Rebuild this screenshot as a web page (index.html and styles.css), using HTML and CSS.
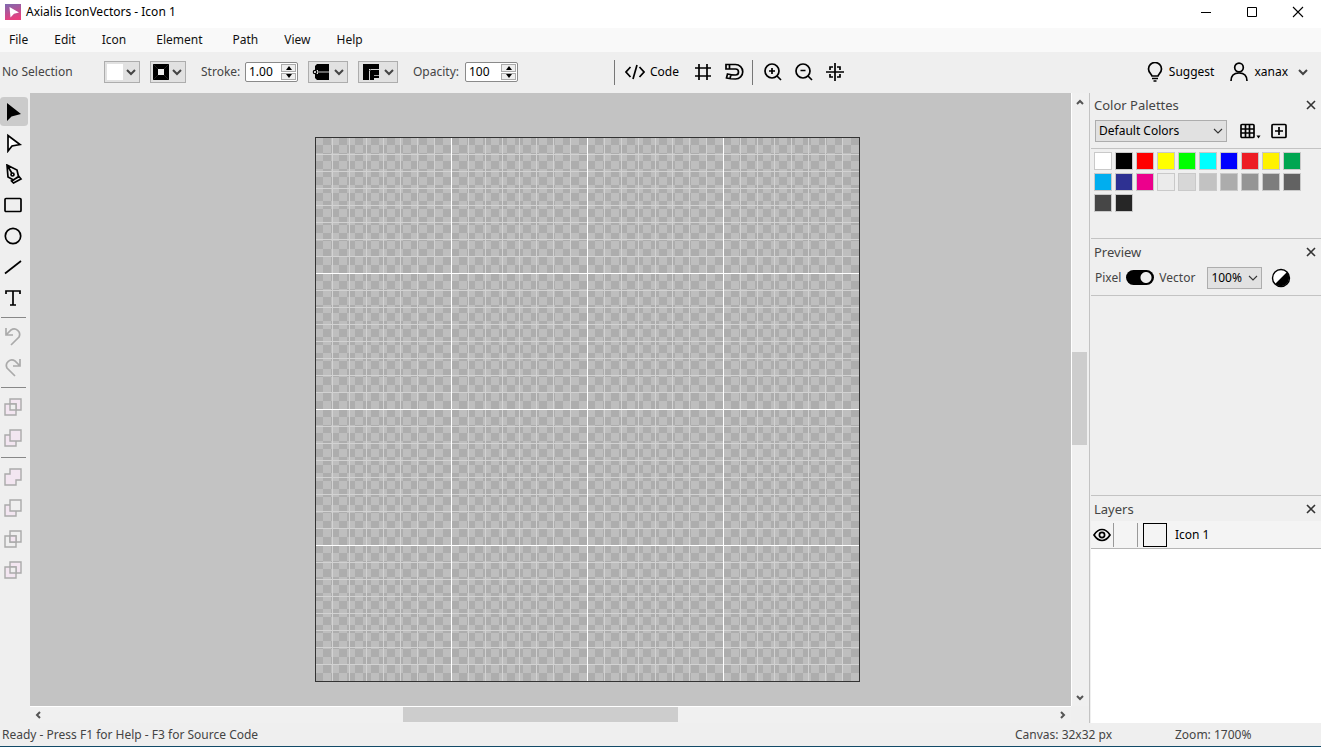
FILE: index.html
```html
<!DOCTYPE html>
<html lang="en">
<head>
<meta charset="utf-8">
<title>Axialis IconVectors - Icon 1</title>
<link rel="stylesheet" href="styles.css">
</head>
<body>
<svg class="defs" aria-hidden="true">
  <symbol id="chevron" viewBox="0 0 12 8"><path d="M2 2l4 4 4-4" fill="none" stroke="currentColor" stroke-width="2"/></symbol>
  <symbol id="thin-chevron" viewBox="0 0 10 8"><path d="M1 2l4 4 4-4" fill="none" stroke="currentColor" stroke-width="1.1"/></symbol>
  <symbol id="close" viewBox="0 0 10 10"><path d="M1 1l8 8M9 1L1 9" fill="none" stroke="currentColor" stroke-width="1.6"/></symbol>
  <linearGradient id="brand" x1="0" y1="0" x2="0.3" y2="1"><stop offset="0" stop-color="#7d6ab0"/><stop offset="1" stop-color="#e8407f"/></linearGradient>
</svg>
<div class="app">
  <header class="titlebar">
    <svg class="logo" width="16" height="16"><rect width="16" height="16" fill="url(#brand)"/><path d="M4.500 3l9.500 5.500-5 1.200L5.500 13.500z" fill="#fff"/></svg>
    <h1 class="title">Axialis IconVectors - Icon 1</h1>
    <div class="window-buttons">
      <button class="window-button" aria-label="Minimize"><svg width="12" height="12"><path d="M1 6.500h10" stroke="#000"/></svg></button>
      <button class="window-button" aria-label="Maximize"><svg width="12" height="12"><path d="M1.500 1.500h9v9h-9z" fill="none" stroke="#000"/></svg></button>
      <button class="window-button" aria-label="Close"><svg width="12" height="12"><path d="M1 1l10 10M11 1L1 11" stroke="#000" stroke-width="1.100"/></svg></button>
    </div>
  </header>
  <nav class="menubar">
    <button class="menu">File</button><button class="menu">Edit</button><button class="menu">Icon</button><button class="menu roomy">Element</button><button class="menu">Path</button><button class="menu">View</button><button class="menu">Help</button>
  </nav>
  <div class="toolbar">
    <span class="selection">No Selection</span>
    <div class="swatch-buttons">
      <button class="drop" aria-label="Fill"><svg width="16" height="16"><path fill="#fff" d="M0 0h16v16H0z"/></svg><svg class="arrow" width="12" height="8"><use href="#chevron"/></svg></button>
      <button class="drop" aria-label="Stroke color"><svg width="16" height="16"><path d="M0 0h16v16H0z"/><path d="M0 0l5 5M16 0l-5 5M0 16l5-5M16 16l-5-5" stroke="#333" stroke-width=".6"/><path fill="#eee" d="M5 5h6v6H5z"/></svg><svg class="arrow" width="12" height="8"><use href="#chevron"/></svg></button>
    </div>
    <label class="field-label stroke-label" for="stroke">Stroke:</label>
    <div class="spinner">
      <input class="number" id="stroke" type="text" inputmode="decimal" value="1.00">
      <div class="steps"><button class="step" aria-label="Increase stroke"><svg width="6" height="4"><path d="M0 4l3-4 3 4z"/></svg></button><button class="step" aria-label="Decrease stroke"><svg width="6" height="4"><path d="M0 0l3 4 3-4z"/></svg></button></div>
    </div>
    <div class="shape-buttons">
      <button class="drop wide" aria-label="Line cap"><svg width="18" height="16"><path d="M3 2l2-2h12v16H5l-2-2v-4h3V6H3z"/><path d="M5 8h12" stroke="#ccc"/><circle cx="3" cy="8" r="1.700" fill="#eee" stroke="#000" stroke-width="1.200"/></svg><svg class="arrow" width="12" height="8"><use href="#chevron"/></svg></button>
      <button class="drop wide" aria-label="Line join"><svg width="18" height="16"><path d="M1 0h16v5H7v11H1z"/><path d="M8 6h9v8h-5v2H8z"/><path d="M7.500 16V5.500H17M12 11.500h5" fill="none" stroke="#ccc" stroke-width=".8"/><path d="M6 4h3v3H6z"/><path d="M7 5h1.500v1.500H7z" fill="#eee"/></svg><svg class="arrow" width="12" height="8"><use href="#chevron"/></svg></button>
    </div>
    <label class="field-label opacity-label" for="opacity">Opacity:</label>
    <div class="spinner">
      <input class="number" id="opacity" type="text" inputmode="numeric" value="100">
      <div class="steps"><button class="step" aria-label="Increase opacity"><svg width="6" height="4"><path d="M0 4l3-4 3 4z"/></svg></button><button class="step" aria-label="Decrease opacity"><svg width="6" height="4"><path d="M0 0l3 4 3-4z"/></svg></button></div>
    </div>
    <div class="view-tools">
      <button class="action code"><svg class="line" width="20" height="16"><path d="M5.500 3L1 8l4.500 5M14.500 3L19 8l-4.500 5M12 1L8 15"/></svg>Code</button>
      <button class="action" aria-label="Grid"><svg class="line" width="18" height="18"><path d="M5 1v16M13 1v16M1 5h16M1 13h16"/></svg></button>
      <button class="action magnet" aria-label="Snap"><svg class="line" width="20" height="18"><path d="M2 1.500h9.500a7.200 7.200 0 0 1 0 14.500q-5 0-9-1l1-4q4 1 8 1a2.800 2.800 0 0 0 0-6H2zM5.500 1.500V6M7 11.500l-1 4"/></svg></button>
      <span class="divider"></span>
      <button class="action zoom-in" aria-label="Zoom in"><svg class="line" width="18" height="18"><circle cx="8" cy="8" r="7"/><path d="M13 13l4 4M5 8h6M8 5v6"/></svg></button>
      <button class="action zoom-out" aria-label="Zoom out"><svg class="line" width="18" height="18"><circle cx="8" cy="8" r="7"/><path d="M13 13l4 4M5.500 7.500h5"/></svg></button>
      <button class="action zoom-fit" aria-label="Center"><svg class="line" width="20" height="18"><path d="M10 0v18M1 9h18M8 4H5v3M12 4h3v3M5 11v3h3M15 11v3h-3"/></svg></button>
    </div>
    <div class="account">
      <button class="action"><svg class="line" width="16" height="20"><path d="M5 14C4.500 12 1.500 10.500 1.500 7a6.500 6.500 0 0 1 13 0c0 3.500-3 5-3.500 7zM5 16.500h6M6.500 19h3"/></svg>Suggest</button>
      <button class="action user"><svg class="line" width="18" height="20"><circle cx="9" cy="5.500" r="4.300"/><path d="M1 19c0-5 3-8 8-8s8 3 8 8"/></svg>xanax<svg class="arrow" width="12" height="8"><use href="#chevron"/></svg></button>
    </div>
  </div>
  <main class="workspace">
    <div class="tools" role="toolbar" aria-label="Tools">
      <button class="tool active" aria-label="Select"><svg width="20" height="20"><path d="M4 1v18l4.500-4.500L18 12z"/></svg></button>
      <button class="tool" aria-label="Direct select"><svg class="line" width="20" height="20"><path fill="#fff" d="M5 2.500V18l4-5 8-1.500z"/></svg></button>
      <button class="tool" aria-label="Pen"><svg class="line" width="20" height="20"><path d="M4 1l10 5 1.500 6.500-5 3.500L5 13zM4 1l4.800 8M8.500 17l7.500-4.500 2 2.500-7.500 4z"/><circle cx="9.500" cy="10.500" r="1.500"/></svg></button>
      <button class="tool" aria-label="Rectangle"><svg class="line" width="20" height="20"><rect x="2" y="3.500" width="16" height="13" rx="1"/></svg></button>
      <button class="tool" aria-label="Ellipse"><svg class="line" width="20" height="20"><circle cx="10" cy="10" r="7.700"/></svg></button>
      <button class="tool" aria-label="Line"><svg class="line" width="20" height="20"><path d="M2 16.500L18 4"/></svg></button>
      <button class="tool" aria-label="Text"><svg class="line" width="20" height="20"><path d="M3 6V3h14v3M10 3v14M7 17h6"/></svg></button>
      <hr class="rule">
      <button class="tool dim" aria-label="Undo"><svg class="line" width="20" height="20"><path d="M3 1v7h7M3 8l5-5a5.500 5.500 0 0 1 8 7L8 18"/></svg></button>
      <button class="tool dim" aria-label="Redo"><svg class="line" width="20" height="20"><path d="M17 1v7h-7M17 8l-5-5a5.500 5.500 0 0 0-8 7l8 8"/></svg></button>
      <hr class="rule">
      <button class="tool dim" aria-label="Exclude"><svg class="bool" width="20" height="20"><path class="pink" d="M7 2h11v11H7z"/><path class="pink" d="M2 7h11v11H2z"/><path class="clear" d="M7 7h6v6H7z"/></svg></button>
      <button class="tool dim" aria-label="Arrange"><svg class="bool" width="20" height="20"><path class="pink" d="M2 7h11v11H2z"/><path class="pink" d="M7 2h11v11H7z"/></svg></button>
      <hr class="rule">
      <button class="tool dim" aria-label="Union"><svg class="bool" width="20" height="20"><path class="pink" d="M7 2h11v11h-5v5H2V7h5z"/></svg></button>
      <button class="tool dim" aria-label="Subtract"><svg class="bool" width="20" height="20"><path class="pink" d="M2 7h11v11H2z"/><path class="clear" d="M7 2h11v11H7z"/></svg></button>
      <button class="tool dim" aria-label="Intersect"><svg class="bool" width="20" height="20"><path class="clear" d="M7 2h11v11H7z"/><path d="M2 7h11v11H2z"/><path class="pink" d="M7 7h6v6H7z"/></svg></button>
      <button class="tool dim" aria-label="Divide"><svg class="bool" width="20" height="20"><path class="pink" d="M7 2h11v11H7z"/><path class="pink" d="M2 7h11v11H2z"/><path class="clear" d="M7 7h6v6H7z"/></svg></button>
    </div>
    <div class="editor">
      <div class="stage"><div class="artboard"></div></div>
      <div class="scroll vertical">
        <button class="scroll-arrow" aria-label="Scroll up"><svg width="8" height="8"><path d="M1 6l3-3 3 3" fill="none" stroke="#555" stroke-width="2"/></svg></button>
        <div class="track"><div class="thumb"></div></div>
        <button class="scroll-arrow" aria-label="Scroll down"><svg width="8" height="8"><path d="M1 2l3 3 3-3" fill="none" stroke="#555" stroke-width="2"/></svg></button>
      </div>
      <div class="scroll horizontal">
        <button class="scroll-arrow" aria-label="Scroll left"><svg width="8" height="8"><path d="M6 1L3 4l3 3" fill="none" stroke="#555" stroke-width="2"/></svg></button>
        <div class="track"><div class="thumb"></div></div>
        <button class="scroll-arrow" aria-label="Scroll right"><svg width="8" height="8"><path d="M2 1l3 3-3 3" fill="none" stroke="#555" stroke-width="2"/></svg></button>
      </div>
    </div>
    <aside class="side">
      <section class="palettes">
        <div class="panel-head"><h2 class="panel-title">Color Palettes</h2><button class="close" aria-label="Close palettes"><svg width="10" height="10"><use href="#close"/></svg></button></div>
        <div class="palette-controls">
          <div class="select-wrap palette-select"><select class="select" aria-label="Palette"><option>Default Colors</option></select><svg class="select-arrow" width="10" height="8"><use href="#thin-chevron"/></svg></div>
          <button class="action palette-grid" aria-label="Palette view"><svg class="line" width="22" height="18"><rect x="2" y="2.500" width="13" height="13" rx="1"/><path d="M6.500 2.500v13M10.500 2.500v13M2 7h13M2 11h13"/><path d="M17.500 13.500h4l-2 3z" fill="#000" stroke="none"/></svg></button>
          <button class="action" aria-label="Add palette"><svg class="line" width="16" height="18"><rect x="1" y="2.500" width="14" height="13" rx="1"/><path d="M4 9h8M8 5v8"/></svg></button>
        </div>
        <div class="swatches">
          <button class="swatch" style="background:#ffffff" aria-label="White"></button><button class="swatch" style="background:#000000" aria-label="Black"></button><button class="swatch" style="background:#ff0000" aria-label="Red"></button><button class="swatch" style="background:#ffff00" aria-label="Yellow"></button><button class="swatch" style="background:#00ff00" aria-label="Lime"></button><button class="swatch" style="background:#00ffff" aria-label="Cyan"></button><button class="swatch" style="background:#0000ff" aria-label="Blue"></button><button class="swatch" style="background:#ed1c24" aria-label="Scarlet"></button><button class="swatch" style="background:#fff200" aria-label="Lemon"></button><button class="swatch" style="background:#00a651" aria-label="Green"></button>
          <button class="swatch" style="background:#00aeef" aria-label="Sky"></button><button class="swatch" style="background:#2e3192" aria-label="Indigo"></button><button class="swatch" style="background:#ec008c" aria-label="Magenta"></button><button class="swatch" style="background:#ebebeb" aria-label="Gray 8"></button><button class="swatch" style="background:#d7d7d7" aria-label="Gray 16"></button><button class="swatch" style="background:#c2c2c2" aria-label="Gray 24"></button><button class="swatch" style="background:#acacac" aria-label="Gray 32"></button><button class="swatch" style="background:#959595" aria-label="Gray 42"></button><button class="swatch" style="background:#7d7d7d" aria-label="Gray 51"></button><button class="swatch" style="background:#626262" aria-label="Gray 62"></button>
          <button class="swatch" style="background:#464646" aria-label="Gray 73"></button><button class="swatch" style="background:#262626" aria-label="Gray 85"></button>
        </div>
      </section>
      <section class="preview">
        <div class="panel-head"><h2 class="panel-title">Preview</h2><button class="close" aria-label="Close preview"><svg width="10" height="10"><use href="#close"/></svg></button></div>
        <div class="preview-controls">
          <label for="mode">Pixel</label><input class="switch" id="mode" type="checkbox" checked><label for="mode">Vector</label>
          <div class="select-wrap zoom-select"><select class="select" aria-label="Preview zoom"><option>100%</option></select><svg class="select-arrow" width="10" height="8"><use href="#thin-chevron"/></svg></div>
          <button class="action" aria-label="Contrast"><svg width="20" height="20"><circle cx="10" cy="10" r="8.500" fill="#fff" stroke="#000" stroke-width="1.400"/><path d="M16 4a8.500 8.500 0 0 1-12 12z"/></svg></button>
        </div>
        <div class="preview-area"></div>
      </section>
      <section class="layers">
        <div class="panel-head"><h2 class="panel-title">Layers</h2><button class="close" aria-label="Close layers"><svg width="10" height="10"><use href="#close"/></svg></button></div>
        <div class="layer">
          <button class="eye" aria-label="Visibility"><svg class="line" width="18" height="14"><path d="M1 7q3.500-5.500 8-5.500T17 7q-3.500 5.500-8 5.500T1 7z"/><circle cx="9" cy="7" r="2.600"/></svg></button>
          <span class="lock"></span><span class="thumbnail"></span><span class="layer-name">Icon 1</span>
        </div>
        <div class="layer-list"></div>
      </section>
    </aside>
  </main>
  <footer class="status"><span class="status-help">Ready - Press F1 for Help - F3 for Source Code</span><span class="status-canvas">Canvas: 32x32 px</span><span class="status-zoom">Zoom: 1700%</span></footer>
</div>
</body>
</html>
```

FILE: styles.css
```css
* { box-sizing: border-box; }
body { margin: 0; font: 12px/16px "Noto Sans", "Open Sans", sans-serif; color: #444; background: #efefef; }
button, input, select { font: inherit; color: #000; border: 0; border-radius: 0; margin: 0; padding: 0; background: none; }
svg { display: block; flex: none; }
.defs { position: absolute; width: 0; height: 0; }
.line { fill: none; stroke: #000; stroke-width: 1.7; }
.app { height: 100vh; display: flex; flex-direction: column; border-bottom: 1px solid #124a68; overflow: hidden; }

.titlebar { flex: none; height: 28px; padding: 0 0 4px 5px; display: flex; align-items: center; background: #fff; }
.title { margin: 0 0 0 5px; font-size: 12px; font-weight: 400; color: #000; }
.window-buttons { margin-left: auto; display: flex; }
.window-button { width: 46px; height: 24px; display: grid; place-items: center; }
.menubar { flex: none; height: 24px; display: flex; gap: 26px; padding-left: 9px; background: #f9f9f9; }
.menu { color: #111; }
.roomy { margin: 0 4px; }

.toolbar { flex: none; height: 41px; padding: 0 12px 1px 2px; display: flex; align-items: center; }
.selection { width: 102px; }
.swatch-buttons, .shape-buttons { display: flex; gap: 10px; }
.drop { width: 36px; height: 22px; padding: 0 2px; display: flex; align-items: center; justify-content: space-between; background: #e1e1e1; border: 1px solid #adadad; }
.wide { width: 40px; padding-left: 3px; }
.arrow { color: #444; }
.field-label { margin-left: 15px; }
.stroke-label { width: 44px; }
.opacity-label { width: 52px; }
.spinner { width: 53px; height: 20px; display: flex; padding: 1px; background: #fff; border: 1px solid #8a8a8a; border-radius: 2px; }
.number { width: 34px; padding-left: 2px; }
.steps { width: 15px; display: flex; flex-direction: column; gap: 1px; }
.step { flex: 1; display: grid; place-items: center; background: #eee; border: 1px solid #aaa; }
.shape-buttons { margin-left: 10px; }
.view-tools { margin-left: 96px; height: 25px; padding-left: 10px; display: flex; align-items: center; border-left: 1px solid #777; }
.action { display: flex; align-items: center; gap: 5px; }
.code { width: 69px; }
.magnet { margin-left: 12px; }
.divider { width: 1px; height: 25px; margin: 0 11px 0 8px; background: #777; }
.zoom-out { margin-left: 13px; }
.zoom-fit { margin-left: 12px; }
.account { margin-left: auto; display: flex; gap: 16px; }
.account .action { gap: 6px; }
.account .arrow { margin-left: 3px; }

.workspace { flex: 1; min-height: 0; display: grid; grid-template-columns: 30px minmax(0, 1fr) 232px; }
.tools { padding-top: 3px; }
.tool { width: 28px; height: 31px; padding: 0 5px 0 3px; display: grid; place-items: center start; }
.active { background: #cbcbcb; border: solid transparent; border-width: 1px 0; border-radius: 4px; background-clip: padding-box; }
.rule { width: 25px; height: 1px; margin: 4px 0 3px 1px; border: 0; background: #888; }
.dim .line { stroke: #aaa; }
.bool { fill: none; stroke: #aaa; stroke-width: 1.4; }
.pink { fill: #f3e6f1; }
.clear { fill: #efefef; }

.editor { display: grid; grid-template: minmax(0, 1fr) 17px / minmax(0, 1fr) 18px; }
.stage { display: grid; place-content: center; padding: 20px 0 0 74px; overflow: hidden; background: #c3c3c3; }
.artboard {
  width: 545px; height: 545px; border: 1px solid #333; background-origin: border-box;
  background-image:
    linear-gradient(to right, #fff 1px, transparent 1px),
    linear-gradient(to bottom, #fff 1px, transparent 1px),
    linear-gradient(to right, #d2d2d2 1px, transparent 1px),
    linear-gradient(to bottom, #d2d2d2 1px, transparent 1px),
    repeating-conic-gradient(#adadad 0 25%, #bebebe 0 50%);
  background-size: 136px 136px, 136px 136px, 17px 17px, 17px 17px, 16px 16px;
}
.scroll { display: flex; background: #f0f0f0; }
.scroll-arrow { flex: none; width: 16px; height: 16px; display: grid; place-items: center; }
.track { flex: 1; display: flex; }
.thumb { background: #cdcdcd; }
.vertical { flex-direction: column; border-left: 1px solid #fff; padding-top: 1px; }
.vertical .scroll-arrow { width: 15px; }
.vertical .track { flex-direction: column; width: 15px; }
.vertical .track::before { content: ""; flex: 242; }
.vertical .thumb { flex: 93; }
.vertical .track::after { content: ""; flex: 245; }
.horizontal { border-top: 1px solid #fff; }
.horizontal .scroll-arrow { height: 15px; }
.horizontal .track { height: 15px; }
.horizontal .track::before { content: ""; flex: 357; }
.horizontal .thumb { flex: 275; }
.horizontal .track::after { content: ""; flex: 377; }

.side { display: flex; flex-direction: column; border-left: 1px solid #c3c3c3; padding-left: 1px; }
.panel-head { flex: none; height: 24px; padding: 0 5px 0 3px; display: flex; align-items: center; justify-content: space-between; }
.panel-title { margin: 0; font-size: 13px; font-weight: 400; }
.close { color: #333; }
.palettes { flex: none; height: 145px; }
.palette-controls { height: 32px; padding: 3px 0 6px 4px; display: flex; align-items: center; gap: 10px; border-bottom: 1px solid #c3c3c3; }
.select-wrap { position: relative; height: 22px; }
.select { width: 100%; height: 100%; padding-left: 3px; appearance: none; background: #e1e1e1; border: 1px solid #adadad; }
.select-arrow { position: absolute; right: 4px; top: 7px; color: #333; pointer-events: none; }
.palette-select { width: 132px; }
.palette-grid { margin-left: 2px; }
.swatches { padding: 3px 0 0 3px; display: grid; grid-template-columns: repeat(10, 18px); gap: 3px; }
.swatch { height: 18px; border: 1px solid #c9c9c9; }
.preview { flex: none; height: 257px; display: flex; flex-direction: column; border-top: 1px solid #c3c3c3; }
.preview .panel-head { height: 26px; }
.preview-controls { height: 31px; padding: 0 0 5px 4px; display: flex; align-items: center; gap: 5px; border-bottom: 1px solid #c3c3c3; }
.switch { appearance: none; width: 28px; height: 15px; border-radius: 8px; background: radial-gradient(circle at 20px 50%, #efefef 5px, #000 6px); }
.zoom-select { width: 55px; margin-left: 7px; }
.preview-controls .action { margin-left: 4px; }
.preview-area { flex: 1; }
.layers { flex: 1; display: flex; flex-direction: column; border-top: 1px solid #c3c3c3; }
.layers .panel-head { height: 25px; }
.layer { flex: none; height: 28px; display: flex; align-items: center; background: #f4f4f4; border-bottom: 1px solid #b5b5b5; }
.eye { width: 22px; padding-left: 2px; }
.lock { width: 25px; height: 24px; border: solid #999; border-width: 0 1px; }
.thumbnail { width: 24px; height: 24px; margin: 0 8px 0 5px; border: 1px solid #000; }
.layer-name { color: #000; }
.layer-list { flex: 1; background: #fff; }

.status { flex: none; height: 23px; padding: 0 16px 0 2px; display: flex; align-items: center; }
.status-canvas { margin-left: auto; width: 160px; }
.status-zoom { width: 130px; }
```
